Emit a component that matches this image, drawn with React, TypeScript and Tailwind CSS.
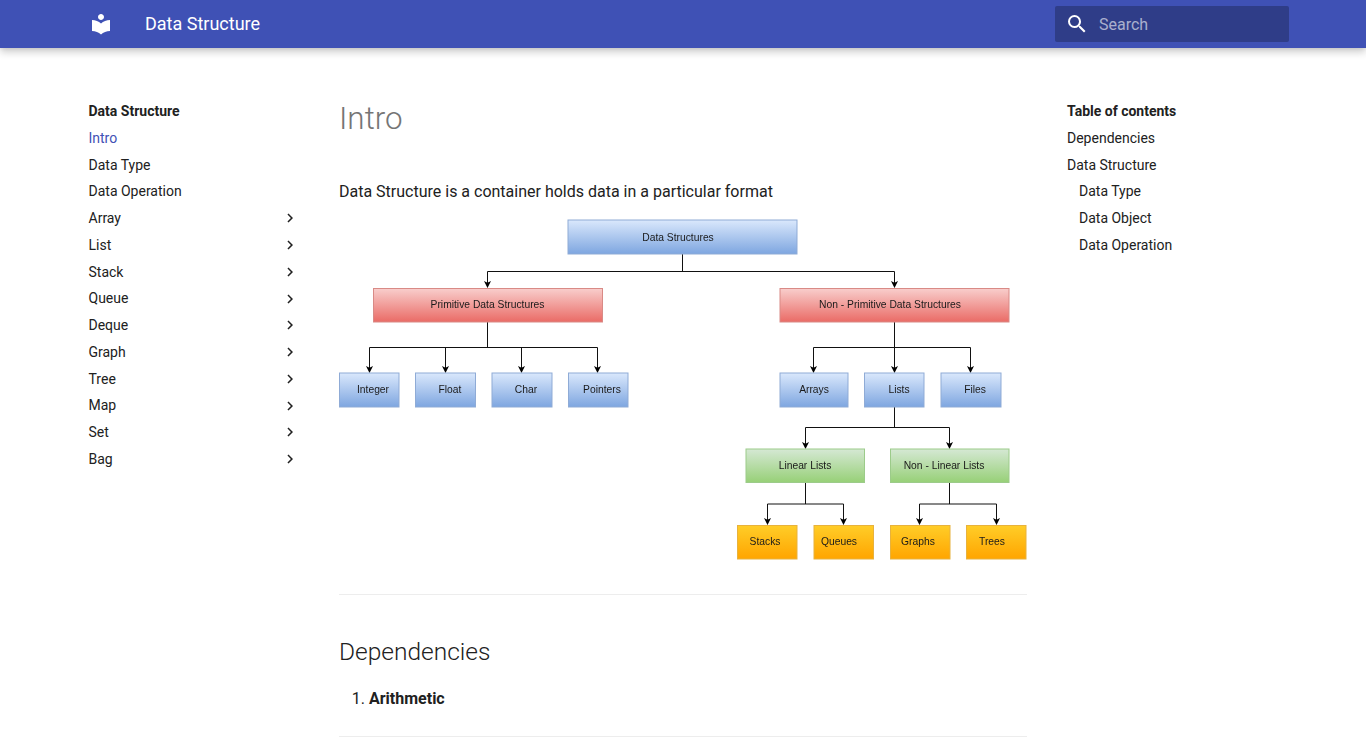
const NAV = ["Array", "List", "Stack", "Queue", "Deque", "Graph", "Tree", "Map", "Set", "Bag"];

const BOXES = [
  { label: "Data Structures", x: 568, y: 220, w: 229, h: 34, tx: 678, ty: 240.5, fill: "blue" },
  { label: "Primitive Data Structures", x: 373.5, y: 288.5, w: 229, h: 33.5, tx: 487.5, ty: 307.5, fill: "red" },
  { label: "Non - Primitive Data Structures", x: 780, y: 288.5, w: 229, h: 33.5, tx: 890, ty: 307.5, fill: "red" },
  { label: "Integer", x: 339.5, y: 373, w: 59.5, h: 34, tx: 373, ty: 392.5, fill: "blue" },
  { label: "Float", x: 415.5, y: 373, w: 60, h: 34, tx: 450, ty: 392.5, fill: "blue" },
  { label: "Char", x: 492, y: 373, w: 60, h: 34, tx: 526, ty: 392.5, fill: "blue" },
  { label: "Pointers", x: 568.5, y: 373, w: 59.5, h: 34, tx: 602, ty: 392.5, fill: "blue" },
  { label: "Arrays", x: 780, y: 373, w: 68, h: 34, tx: 814, ty: 392.5, fill: "blue" },
  { label: "Lists", x: 864.5, y: 373, w: 59.5, h: 34, tx: 899, ty: 392.5, fill: "blue" },
  { label: "Files", x: 941, y: 373, w: 60, h: 34, tx: 975, ty: 392.5, fill: "blue" },
  { label: "Linear Lists", x: 746, y: 449, w: 118.5, h: 33.5, tx: 805, ty: 468.5, fill: "green" },
  { label: "Non - Linear Lists", x: 890.5, y: 449, w: 118.5, h: 33.5, tx: 944, ty: 468.5, fill: "green" },
  { label: "Stacks", x: 737.5, y: 525.5, w: 59.5, h: 33.5, tx: 765, ty: 545, fill: "orange" },
  { label: "Queues", x: 814, y: 525.5, w: 59.5, h: 33.5, tx: 839, ty: 545, fill: "orange" },
  { label: "Graphs", x: 890.5, y: 525.5, w: 59.5, h: 33.5, tx: 918, ty: 545, fill: "orange" },
  { label: "Trees", x: 966.5, y: 525.5, w: 59.5, h: 33.5, tx: 992, ty: 545, fill: "orange" },
];

const STROKES: Record<string, string> = {
  blue: "#8fabd6",
  red: "#d98a86",
  green: "#9ccb8a",
  orange: "#e8b23c",
};

const LINES = [
  "M682.5 254V271.5", "M487.5 271.5H894.5", "M487.5 271.5V283", "M894.5 271.5V283",
  "M487.5 322V347.5", "M369.5 347.5H597.5", "M369.5 347.5V368", "M445.5 347.5V368", "M521.5 347.5V368", "M597.5 347.5V368",
  "M894.5 322V368", "M813.5 347.5H970.5", "M813.5 347.5V368", "M970.5 347.5V368",
  "M894.5 407V427.5", "M805.5 427.5H949.5", "M805.5 427.5V444", "M949.5 427.5V444",
  "M805.5 483V504", "M767.5 504H843.5", "M767.5 504V520", "M843.5 504V520",
  "M949.5 483V504", "M919.5 504H996.5", "M919.5 504V520", "M996.5 504V520",
];

const ARROWS = [
  [487.5, 288], [894.5, 288],
  [369.5, 373], [445.5, 373], [521.5, 373], [597.5, 373],
  [813.5, 373], [894.5, 373], [970.5, 373],
  [805.5, 449], [949.5, 449],
  [767.5, 525], [843.5, 525], [919.5, 525], [996.5, 525],
];

function Diagram() {
  return (
    <svg width="688" height="344" viewBox="339 218 688 344" className="block mt-[13px] blur-[0.3px]">
      <defs>
        <linearGradient id="blue" x1="0" y1="0" x2="0" y2="1">
          <stop offset="0" stopColor="#dae8fc" />
          <stop offset="1" stopColor="#7ea6e0" />
        </linearGradient>
        <linearGradient id="red" x1="0" y1="0" x2="0" y2="1">
          <stop offset="0" stopColor="#f8cecc" />
          <stop offset="1" stopColor="#ea6b66" />
        </linearGradient>
        <linearGradient id="green" x1="0" y1="0" x2="0" y2="1">
          <stop offset="0" stopColor="#d5e8d4" />
          <stop offset="1" stopColor="#97d077" />
        </linearGradient>
        <linearGradient id="orange" x1="0" y1="0" x2="0" y2="1">
          <stop offset="0" stopColor="#ffcd28" />
          <stop offset="1" stopColor="#ffa500" />
        </linearGradient>
      </defs>
      {LINES.map((d) => (
        <path key={d} d={d} fill="none" stroke="#111" strokeWidth="1" />
      ))}
      {ARROWS.map(([x, y]) => (
        <path key={`${x}-${y}`} d={`M${x} ${y}l-3.5 -7l3.5 1.7l3.5 -1.7z`} fill="#000" />
      ))}
      {BOXES.map((b) => (
        <g key={b.label}>
          <rect x={b.x} y={b.y} width={b.w} height={b.h} fill={`url(#${b.fill})`} stroke={STROKES[b.fill]} strokeWidth="1" />
          <text
            x={b.tx}
            y={b.ty}
            textAnchor="middle"
            fontSize="10.3"
            fill="#1a1a1a"
            className="font-['Liberation_Sans',sans-serif]"
          >
            {b.label}
          </text>
        </g>
      ))}
    </svg>
  );
}

function Chevron() {
  return (
    <svg width="18" height="18" viewBox="0 0 24 24" fill="currentColor" className="-mt-[0.5px]">
      <path d="M8.59 16.58L13.17 12 8.59 7.41 10 6l6 6-6 6-1.41-1.42z" />
    </svg>
  );
}

export default function App() {
  return (
    <div className="h-screen overflow-hidden bg-white font-['Roboto',sans-serif] text-[#212121]">
      <header className="relative z-10 h-12 flex items-center bg-[#3f51b5] text-white pl-[89px] pr-[77px] shadow-[0_0_4px_rgba(0,0,0,0.1),0_4px_8px_rgba(0,0,0,0.2)]">
        <svg width="24" height="24" viewBox="0 0 24 24" fill="currentColor">
          <path d="M12 11.55C9.64 9.35 6.48 8 3 8v11c3.48 0 6.64 1.35 9 3.55 2.36-2.19 5.52-3.55 9-3.55V8c-3.48 0-6.64 1.35-9 3.55zM12 8c1.66 0 3-1.34 3-3s-1.34-3-3-3-3 1.34-3 3 1.34 3 3 3z" />
        </svg>
        <span className="ml-8 mb-[2px] text-[18px]">Data Structure</span>
        <div className="ml-auto w-[234px] h-9 flex items-center rounded-[2px] bg-[#2f3d88] pl-[10px]">
          <svg width="24" height="24" viewBox="0 0 24 24" fill="currentColor">
            <path d="M9.5 3A6.5 6.5 0 0 1 16 9.5c0 1.61-.59 3.09-1.56 4.23l.27.27h.79l5 5-1.5 1.5-5-5v-.79l-.27-.27A6.516 6.516 0 0 1 9.5 16 6.5 6.5 0 0 1 3 9.5 6.5 6.5 0 0 1 9.5 3m0 2C7 5 5 7 5 9.5S7 14 9.5 14 14 12 14 9.5 12 5 9.5 5z" />
          </svg>
          <span className="ml-[10px] mt-[2px] text-[16px] text-white/60">Search</span>
        </div>
      </header>

      <div className="flex pl-[88.5px]">
        <nav className="w-[250.5px] shrink-0 pt-[50.35px] text-[14px]">
          <div className="h-[26.75px] flex items-center font-bold">Data Structure</div>
          <div className="h-[26.75px] flex items-center text-[#3f51b5]">Intro</div>
          <div className="h-[26.75px] flex items-center">Data Type</div>
          <div className="h-[26.75px] flex items-center">Data Operation</div>
          {NAV.map((item) => (
            <div key={item} className="h-[26.75px] w-[210.5px] flex items-center justify-between">
              {item}
              <Chevron />
            </div>
          ))}
        </nav>

        <main className="w-[688px] shrink-0 pt-[50px]">
          <h1 className="text-[31.4px] leading-[41.6px] font-light text-[#757575]">Intro</h1>
          <p className="mt-[39.4px] text-[16px] leading-[25.6px]">
            Data Structure is a container holds data in a particular format
          </p>
          <Diagram />
          <hr className="mt-8 border-[#ededed]" />
          <h2 className="mt-[41px] text-[24.5px] leading-[32.5px] font-light">Dependencies</h2>
          <ol className="mt-[17.5px] list-decimal pl-[30px] text-[16px] leading-[25.6px]">
            <li>
              <strong className="font-bold">Arithmetic</strong>
            </li>
          </ol>
          <hr className="mt-[25px] border-[#ededed]" />
        </main>

        <aside className="ml-10 pt-[50.35px] text-[14px]">
          <div className="h-[26.75px] flex items-center font-bold">Table of contents</div>
          <div className="h-[26.75px] flex items-center">Dependencies</div>
          <div className="h-[26.75px] flex items-center">Data Structure</div>
          <div className="h-[26.75px] flex items-center pl-3">Data Type</div>
          <div className="h-[26.75px] flex items-center pl-3">Data Object</div>
          <div className="h-[26.75px] flex items-center pl-3">Data Operation</div>
        </aside>
      </div>
    </div>
  );
}
